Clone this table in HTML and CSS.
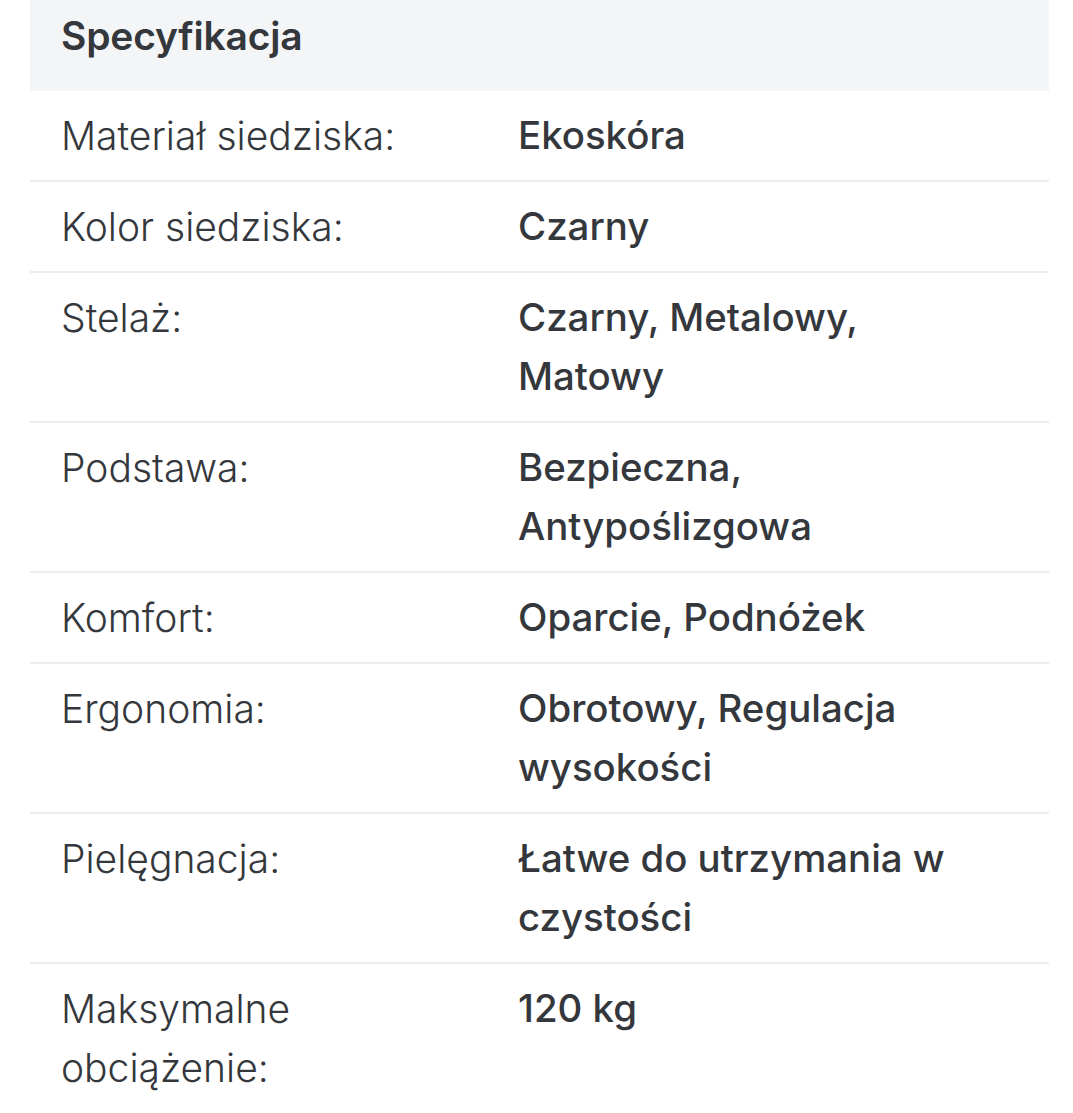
FILE: index.html
```html
<!DOCTYPE html>
<html lang="pl">
<head>
<meta charset="utf-8">
<link rel="stylesheet" href="styles.css">
</head>
<body>
<div class="spec">
  <div class="spec-head">Specyfikacja</div>
  <div class="row"><div class="label">Materiał siedziska:</div><div class="value">Ekoskóra</div></div>
  <div class="row"><div class="label">Kolor siedziska:</div><div class="value">Czarny</div></div>
  <div class="row"><div class="label">Stelaż:</div><div class="value">Czarny, Metalowy, Matowy</div></div>
  <div class="row"><div class="label">Podstawa:</div><div class="value">Bezpieczna, Antypoślizgowa</div></div>
  <div class="row"><div class="label">Komfort:</div><div class="value">Oparcie, Podnóżek</div></div>
  <div class="row"><div class="label">Ergonomia:</div><div class="value">Obrotowy, Regulacja wysokości</div></div>
  <div class="row"><div class="label">Pielęgnacja:</div><div class="value">Łatwe do utrzymania w czystości</div></div>
  <div class="row last"><div class="label">Maksymalne obciążenie:</div><div class="value">120 kg</div></div>
</div>
</body>
</html>
```
FILE: styles.css
```css
html, body {
  margin: 0;
  padding: 0;
  background: #ffffff;
}
body {
  font-family: Inter, "Noto Sans", sans-serif;
  color: #34373c;
  overflow: hidden;
}
.spec {
  margin: 0 24px 0 30px;
  display: flex;
  flex-direction: column;
}
.spec-head {
  background: #f4f5f7;
  height: 91px;
  box-sizing: border-box;
  padding: 12px 31px 0;
  font-size: 39px;
  font-weight: 600;
  line-height: 48px;
  letter-spacing: -0.2px;
}
.row {
  display: grid;
  grid-template-columns: 457px 455px;
  padding: 15px 31px;
  border-bottom: 2px solid #ececee;
  line-height: 59px;
}
.row.last {
  border-bottom: none;
}
.label {
  font-size: 39px;
  font-weight: 300;
  padding-right: 30px;
}
.value {
  font-size: 38.4px;
  font-weight: 500;
}
```
